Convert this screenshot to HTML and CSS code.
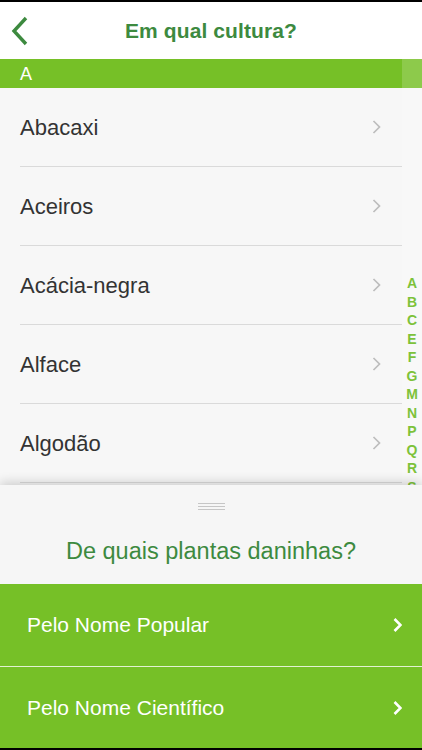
FILE: index.html
```html
<!DOCTYPE html>
<html>
<head>
    <meta charset="utf-8">
    <meta content="width=device-width, initial-scale=1.0" name="viewport">
    <title>Em qual cultura?</title>
    <link rel="stylesheet" href="styles.css">
</head>
<body>
<div class="screen">
    <div class="topbar">
        <a href="javascript:;" class="back">
            <svg width="18" height="30" viewBox="0 0 18 30"><polyline points="15,2 3,15 15,28" fill="none" stroke="#3d8a3f" stroke-width="3.4"/></svg>
        </a>
        <h1>Em qual cultura?</h1>
    </div>

    <div class="scroll">
        <div class="section">A</div>
        <ul class="list">
            <li><span>Abacaxi</span><svg class="chev" viewBox="0 0 9 14"><polyline points="1.5,1 7.5,7 1.5,13"/></svg></li>
            <li><span>Aceiros</span><svg class="chev" viewBox="0 0 9 14"><polyline points="1.5,1 7.5,7 1.5,13"/></svg></li>
            <li><span>Acácia-negra</span><svg class="chev" viewBox="0 0 9 14"><polyline points="1.5,1 7.5,7 1.5,13"/></svg></li>
            <li><span>Alface</span><svg class="chev" viewBox="0 0 9 14"><polyline points="1.5,1 7.5,7 1.5,13"/></svg></li>
            <li><span>Algodão</span><svg class="chev" viewBox="0 0 9 14"><polyline points="1.5,1 7.5,7 1.5,13"/></svg></li>
        </ul>
        <div class="index">
            <span>A</span><span>B</span><span>C</span><span>E</span><span>F</span><span>G</span>
            <span>M</span><span>N</span><span>P</span><span>Q</span><span>R</span><span>S</span>
        </div>
    </div>

    <div class="sheet">
        <div class="handle"><b></b><b></b><b></b></div>
        <h2>De quais plantas daninhas?</h2>
        <a href="javascript:;" class="opt">Pelo Nome Popular <svg class="chev white" viewBox="0 0 9 14"><polyline points="1.5,1 7.5,7 1.5,13"/></svg></a>
        <a href="javascript:;" class="opt">Pelo Nome Científico <svg class="chev white" viewBox="0 0 9 14"><polyline points="1.5,1 7.5,7 1.5,13"/></svg></a>
    </div>
</div>
</body>
</html>
```

FILE: styles.css
```css
html, body{
    margin: 0;
    padding: 0;
    background: #000;
}
body{
    font-family: "Liberation Sans", Arial, sans-serif;
}
.screen{
    width: 422px;
    height: 750px;
    display: flex;
    flex-direction: column;
    background: #f7f7f7;
    border-top: 2px solid #000;
    border-bottom: 2px solid #000;
    box-sizing: border-box;
    overflow: hidden;
}
.topbar{
    height: 57px;
    background: #fff;
    display: flex;
    align-items: center;
    justify-content: center;
    position: relative;
}
.topbar h1{
    margin: 0;
    font-size: 21px;
    font-weight: bold;
    color: #3d8a3f;
    letter-spacing: .1px;
}
.back{
    position: absolute;
    left: 11px;
    top: 14px;
}
.back svg{ display: block; }

.scroll{
    flex: 1;
    position: relative;
    overflow: hidden;
}
.section{
    height: 29px;
    line-height: 30px;
    background: #76c027;
    color: #fff;
    font-size: 18px;
    padding-left: 20px;
}
.list{
    list-style: none;
    margin: 0;
    padding: 0;
}
.list li{
    height: 78px;
    margin: 0 20px;
    border-bottom: 1px solid #dadada;
    display: flex;
    align-items: center;
    justify-content: space-between;
    font-size: 22px;
    color: #333;
    padding-right: 21px;
}
.list li span{
    padding-top: 2px;
}
.chev{
    width: 9px;
    height: 14px;
    fill: none;
    stroke: #bdbdbd;
    stroke-width: 1.7;
}
.index{
    position: absolute;
    top: 0;
    right: 0;
    bottom: 0;
    width: 20px;
    background: rgba(255,255,255,.17);
    padding-top: 215px;
    box-sizing: border-box;
    display: flex;
    flex-direction: column;
    align-items: center;
}
.index span{
    display: block;
    height: 18.5px;
    line-height: 18.5px;
    font-size: 14px;
    font-weight: bold;
    color: #7dc23a;
}

.sheet{
    position: relative;
    background: #f6f6f6;
    box-shadow: 0 -3px 10px rgba(0,0,0,.16);
}
.handle{
    width: 27px;
    margin: 18px auto 0;
}
.handle b{
    display: block;
    height: 1px;
    background: #c6c6c6;
    margin-bottom: 2px;
}
.sheet h2{
    margin: 0;
    padding: 25px 0 19px;
    line-height: 28px;
    font-size: 23.5px;
    font-weight: normal;
    text-align: center;
    color: #3d8a3f;
}
.opt{
    display: flex;
    align-items: center;
    justify-content: space-between;
    height: 82px;
    padding: 0 20px 0 27px;
    background: #76c027;
    color: #fff;
    font-size: 21px;
    text-decoration: none;
}
.opt + .opt{
    height: 81px;
    border-top: 1.5px solid #e2f2d2;
}
.chev.white{
    stroke: #fff;
    stroke-width: 2.6;
}
```
